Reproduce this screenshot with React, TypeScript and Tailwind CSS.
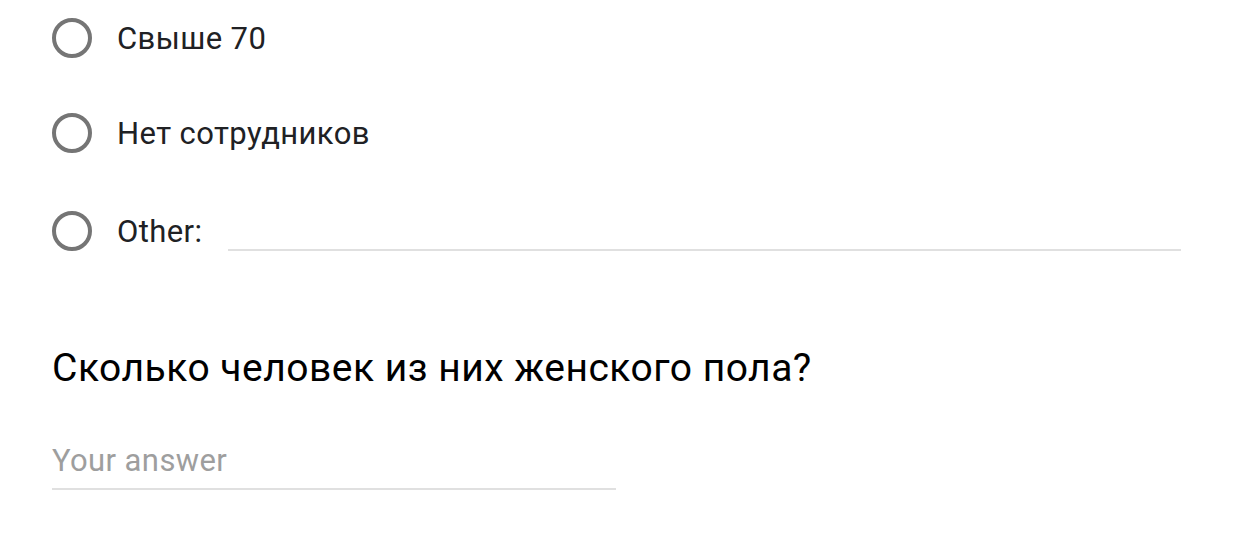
import React from 'react';

const options = ['Свыше 70', 'Нет сотрудников'];

const Radio: React.FC = () => (
  <div className="w-[40px] h-[40px] rounded-full border-[4px] border-[#757575] shrink-0" />
);

export default function App() {
  return (
    <div className="w-[1242px] h-[546px] bg-white overflow-hidden font-['Roboto',sans-serif] text-[#202124]">
      <div className="pl-[52px] pt-[18px]">
        <div className="flex flex-col gap-[55px]">
          {options.map((o) => (
            <div key={o} className="flex items-center h-[40px]">
              <Radio />
              <span className="ml-[25px] text-[31px] leading-none tracking-[0.4px]">{o}</span>
            </div>
          ))}
          <div className="flex items-center h-[40px] mt-[3px]">
            <Radio />
            <span className="ml-[25px] text-[31px] leading-none tracking-[0.4px]">Other:</span>
            <div className="ml-[26px] w-[953px] h-[40px] border-b-2 border-[#e0e0e0]" />
          </div>
        </div>

        <h2 className="mt-[98px] text-[39px] leading-none tracking-[0.5px] text-black">
          Сколько человек из них женского пола?
        </h2>

        <div className="mt-[57px] w-[564px] border-b-2 border-[#e0e0e0] pb-[10px]">
          <span className="text-[31px] leading-none tracking-[0.4px] text-[#9e9e9e]">Your answer</span>
        </div>
      </div>
    </div>
  );
}
